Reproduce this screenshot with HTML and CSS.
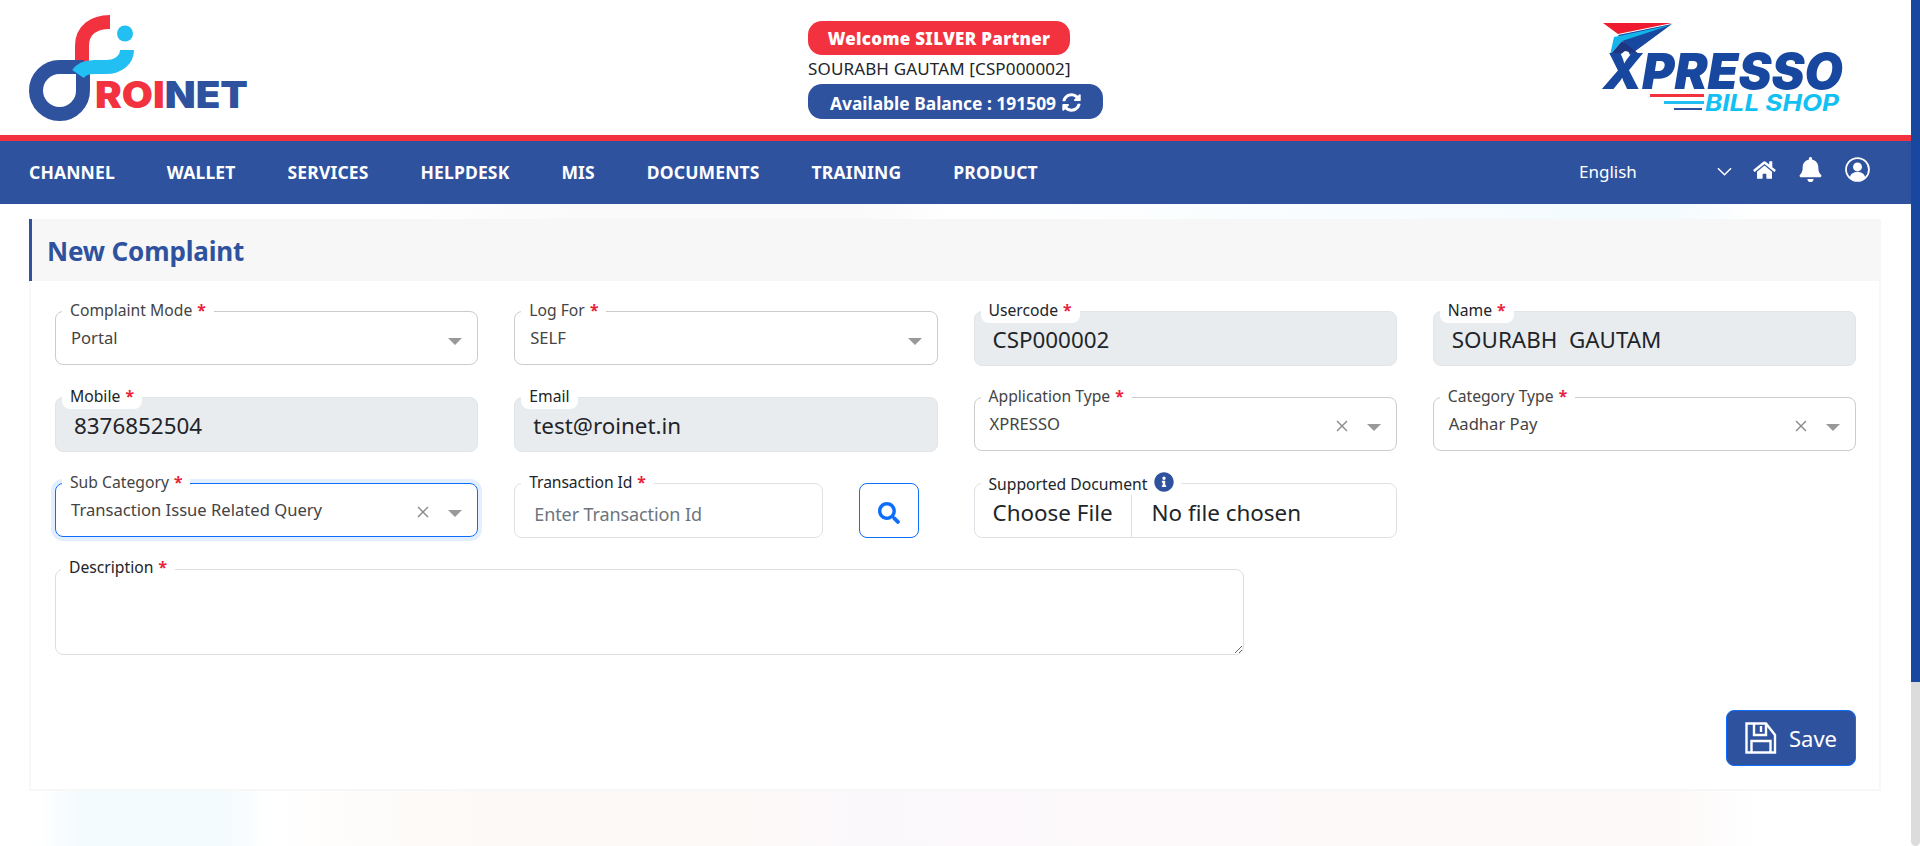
FILE: index.html
```html
<!DOCTYPE html>
<html lang="en">
<head>
  <meta charset="UTF-8" />
  <meta name="viewport" content="width=device-width, initial-scale=1" />
  <title>New Complaint</title>
  <link rel="stylesheet" href="styles.css">
</head>
<body>
  <div class="page">
    <!-- top header -->
    <header class="topbar">
      <svg class="logo-roinet" viewBox="0 0 260 125" aria-label="Roinet logo">
        <path d="M82 66 V46 C82 30 94 22 110 22" fill="none" stroke="#f2333f" stroke-width="14"/>
        <path d="M84 67 H59.500 A23.500 23.500 0 1 0 83 90 V72" fill="none" stroke="#2f529f" stroke-width="14"/>
        <path d="M78 74 C82 68 88 67 94 67 H106 C118 67 127 60 127 50" fill="none" stroke="#22bff3" stroke-width="14"/>
        <circle cx="125" cy="33.500" r="8" fill="#22bff3"/>
        <text class="logo-roinet-text" x="95" y="108" textLength="153" lengthAdjust="spacingAndGlyphs"><tspan fill="#f2333f">ROI</tspan><tspan fill="#2f529f">NET</tspan></text>
      </svg>

      <div class="partner">
        <div class="pill pill-red">Welcome SILVER Partner</div>
        <div class="partner-name">SOURABH GAUTAM [CSP000002]</div>
        <div class="pill pill-blue">
          Available Balance : 191509
          <svg class="refresh" viewBox="0 0 512 512"><path d="M370.72 133.28C339.458 104.008 298.888 87.962 255.848 88c-77.458.068-144.328 53.178-162.791 126.85-1.344 5.363-6.122 9.15-11.651 9.15H24.103c-7.498 0-13.194-6.807-11.807-14.176C33.933 94.924 134.813 8 256 8c66.448 0 126.791 26.136 171.315 68.685L463.03 40.97C478.149 25.851 504 36.559 504 57.941V192c0 13.255-10.745 24-24 24H345.941c-21.382 0-32.09-25.851-16.971-40.971l41.75-41.749zM32 296h134.059c21.382 0 32.09 25.851 16.971 40.971l-41.75 41.75c31.262 29.273 71.835 45.319 114.876 45.28 77.418-.07 144.315-53.144 162.787-126.849 1.344-5.363 6.122-9.15 11.651-9.15h57.304c7.498 0 13.194 6.807 11.807 14.176C478.067 417.076 377.187 504 256 504c-66.448 0-126.791-26.136-171.315-68.685L48.97 471.03C33.851 486.149 8 475.441 8 454.059V320c0-13.255 10.745-24 24-24z"/></svg>
        </div>
      </div>

      <svg class="logo-xpresso" viewBox="0 0 250 120" aria-label="Xpresso Bill Shop logo">
        <polygon points="3,23 72,23 18,34" fill="#ee1c2e"/>
        <polygon points="18,35 72,24 30,55 24,43" fill="#17479e"/>
        <polygon points="14,37 71,25 22,41 10,55" fill="#12b5ea"/>
        <polygon points="10,55 22,41 39,54 25,51 17,57" fill="#1e3580"/>
        <text class="logo-xpresso-name" x="3" y="89" textLength="240" lengthAdjust="spacingAndGlyphs">XPRESSO</text>
        <rect x="50" y="94" width="54" height="3" fill="#f2333f"/>
        <rect x="64" y="101" width="40" height="3" fill="#22bff3"/>
        <rect x="74" y="108" width="28" height="2" fill="#2f529f"/>
        <text class="logo-xpresso-sub" x="105" y="111" textLength="134" lengthAdjust="spacingAndGlyphs">BILL SHOP</text>
      </svg>
    </header>

    <!-- main nav -->
    <nav class="mainnav">
      <ul class="nav-links">
        <li>CHANNEL</li>
        <li>WALLET</li>
        <li>SERVICES</li>
        <li>HELPDESK</li>
        <li>MIS</li>
        <li>DOCUMENTS</li>
        <li>TRAINING</li>
        <li>PRODUCT</li>
      </ul>
      <div class="nav-tools">
        <div class="lang">
          <span class="lang-name">English</span>
          <svg class="chevron" viewBox="0 0 16 16"><path d="M1 4.500l7 7 7-7" fill="none" stroke="#fff" stroke-width="1.600"/></svg>
        </div>
        <svg class="tool-home" viewBox="0 0 576 512"><path fill="#fff" d="M280.37 148.26L96 300.11V464a16 16 0 0 0 16 16l112.06-.29a16 16 0 0 0 15.92-16V368a16 16 0 0 1 16-16h64a16 16 0 0 1 16 16v95.64a16 16 0 0 0 16 16.05L464 480a16 16 0 0 0 16-16V300L295.67 148.26a12.19 12.19 0 0 0-15.3 0zM571.6 251.47L488 182.56V44.05a12 12 0 0 0-12-12h-56a12 12 0 0 0-12 12v72.61L318.47 43a48 48 0 0 0-61 0L4.34 251.47a12 12 0 0 0-1.6 16.9l25.5 31A12 12 0 0 0 45.15 301l235.22-193.74a12.19 12.19 0 0 1 15.3 0L530.9 301a12 12 0 0 0 16.9-1.6l25.5-31a12 12 0 0 0-1.7-16.93z"/></svg>
        <svg class="tool-bell" viewBox="0 0 448 512"><path fill="#fff" d="M224 512c35.32 0 63.97-28.65 63.97-64H160.03c0 35.35 28.65 64 63.97 64zm215.39-149.71c-19.32-20.76-55.47-51.99-55.47-154.29 0-77.7-54.48-139.9-127.94-155.16V32c0-17.67-14.32-32-31.98-32s-31.98 14.33-31.98 32v20.84C118.56 68.1 64.08 130.3 64.08 208c0 102.3-36.15 133.53-55.47 154.29-6 6.45-8.66 14.16-8.61 21.71.11 16.4 12.98 32 32.1 32h383.8c19.12 0 32-15.6 32.1-32 .05-7.55-2.61-15.27-8.61-21.71z"/></svg>
        <svg class="tool-user" viewBox="0 0 24 24">
          <circle cx="12" cy="12" r="11" fill="none" stroke="#fff" stroke-width="1.700"/>
          <circle cx="12" cy="9.500" r="4.300" fill="#fff"/>
          <path d="M4.600 19.400c1-3.600 3.600-5 7.400-5s6.400 1.400 7.400 5c-2 2-4.600 3.200-7.400 3.200s-5.400-1.200-7.400-3.200z" fill="#fff"/>
        </svg>
      </div>
    </nav>

    <main class="content">
      <section class="card">
        <h2 class="card-title">New Complaint</h2>
        <form class="card-body">
          <div class="form-grid">
            <div class="field field-select">
              <label>Complaint Mode <b>*</b></label>
              <span class="value">Portal</span>
              <i class="caret"></i>
            </div>
            <div class="field field-select">
              <label>Log For <b>*</b></label>
              <span class="value">SELF</span>
              <i class="caret"></i>
            </div>
            <div class="field field-input is-disabled">
              <label>Usercode <b>*</b></label>
              <span class="value">CSP000002</span>
            </div>
            <div class="field field-input is-disabled">
              <label>Name <b>*</b></label>
              <span class="value value-pre">SOURABH  GAUTAM</span>
            </div>

            <div class="field field-input is-disabled">
              <label>Mobile <b>*</b></label>
              <span class="value">8376852504</span>
            </div>
            <div class="field field-input is-disabled">
              <label>Email</label>
              <span class="value">test@roinet.in</span>
            </div>
            <div class="field field-select">
              <label>Application Type <b>*</b></label>
              <span class="value">XPRESSO</span>
              <svg class="clear" viewBox="0 0 12 12"><path d="M1 1l10 10M11 1L1 11"/></svg>
              <i class="caret"></i>
            </div>
            <div class="field field-select">
              <label>Category Type <b>*</b></label>
              <span class="value">Aadhar Pay</span>
              <svg class="clear" viewBox="0 0 12 12"><path d="M1 1l10 10M11 1L1 11"/></svg>
              <i class="caret"></i>
            </div>

            <div class="field field-select is-focus">
              <label>Sub Category <b>*</b></label>
              <span class="value">Transaction Issue Related Query</span>
              <svg class="clear" viewBox="0 0 12 12"><path d="M1 1l10 10M11 1L1 11"/></svg>
              <i class="caret"></i>
            </div>
            <div class="txn-group">
              <div class="field field-input is-light">
                <label>Transaction Id <b>*</b></label>
                <span class="value placeholder">Enter Transaction Id</span>
              </div>
              <button type="button" class="btn-search">
                <svg viewBox="0 0 512 512"><path d="M505 442.700L405.300 343c-4.500-4.500-10.600-7-17-7H372c27.600-35.300 44-79.700 44-128C416 93.100 322.900 0 208 0S0 93.100 0 208s93.100 208 208 208c48.300 0 92.700-16.400 128-44v16.300c0 6.400 2.500 12.500 7 17l99.700 99.700c9.400 9.400 24.600 9.400 33.900 0l28.300-28.300c9.400-9.400 9.400-24.600.1-34zM208 336c-70.700 0-128-57.200-128-128 0-70.700 57.200-128 128-128 70.700 0 128 57.200 128 128 0 70.700-57.200 128-128 128z"/></svg>
              </button>
            </div>
            <div class="field field-file is-light">
              <label>Supported Document
                <svg class="info" viewBox="0 0 512 512"><path d="M256 8C119.043 8 8 119.083 8 256c0 136.997 111.043 248 248 248s248-111.003 248-248C504 119.083 392.957 8 256 8zm0 110c23.196 0 42 18.804 42 42s-18.804 42-42 42-42-18.804-42-42 18.804-42 42-42zm56 254c0 6.627-5.373 12-12 12h-88c-6.627 0-12-5.373-12-12v-24c0-6.627 5.373-12 12-12h12v-64h-12c-6.627 0-12-5.373-12-12v-24c0-6.627 5.373-12 12-12h64c6.627 0 12 5.373 12 12v100h12c6.627 0 12 5.373 12 12v24z"/></svg>
              </label>
              <span class="file-btn">Choose File</span>
              <span class="file-name">No file chosen</span>
            </div>
          </div>

          <div class="field field-area">
            <label>Description <b>*</b></label>
            <textarea></textarea>
          </div>

          <div class="actions">
            <button type="button" class="btn-save">
              <svg viewBox="0 0 32 32"><path d="M1.500 1.500H21L30 13V30.500H1.500Z M9 2V13H21V2 M16 4V10 M6.500 30V19H25.500V30" fill="none" stroke="#fff" stroke-width="2.400"/></svg>
              Save
            </button>
          </div>
        </form>
      </section>
    </main>
  </div>

  <div class="scrollbar"><div class="scrollbar-thumb"></div></div>
</body>
</html>
```

FILE: styles.css
```css
* { box-sizing: border-box; }

body {
  margin: 0;
  height: 846px;
  display: flex;
  overflow: hidden;
  background: #fff;
  color: #212529;
  font-family: "Noto Sans", "Open Sans", sans-serif;
}

.page {
  flex: 1;
  min-width: 0;
  display: flex;
  flex-direction: column;
}

/* header */
.topbar {
  height: 141px;
  flex: none;
  background: #fff;
  border-bottom: 6px solid #f2333f;
  display: flex;
  align-items: flex-start;
}

.logo-roinet {
  width: 260px;
  height: 125px;
  flex: none;
  margin-right: 548px;
}

.logo-roinet-text {
  font-family: "Inter", sans-serif;
  font-weight: 900;
  font-size: 37px;
}

.partner {
  width: 295px;
  flex: none;
  padding-top: 21px;
  margin-right: 497px;
}

.pill {
  color: #fff;
  font-weight: 700;
  display: flex;
  align-items: center;
  justify-content: center;
}

.pill-red {
  width: 262px;
  height: 34px;
  background: #f2333f;
  border-radius: 14px;
  font-size: 17px;
  font-weight: 900;
  letter-spacing: 0.3px;
}

.partner-name {
  height: 29px;
  line-height: 27px;
  font-size: 17px;
  letter-spacing: 0.14px;
  white-space: nowrap;
}

.pill-blue {
  width: 295px;
  height: 35px;
  padding-top: 2px;
  background: #2f529f;
  border-radius: 14px;
  font-size: 17.4px;
  gap: 6px;
}

.refresh {
  width: 19px;
  height: 19px;
  fill: #fff;
}

.logo-xpresso {
  width: 250px;
  height: 120px;
  flex: none;
}

.logo-xpresso-name {
  font-family: "Inter", sans-serif;
  font-weight: 900;
  font-style: italic;
  font-size: 50px;
  fill: #17479e;
}

.logo-xpresso-sub {
  font-family: "Inter", sans-serif;
  font-weight: 700;
  font-style: italic;
  font-size: 23px;
  fill: #12c0f3;
}

/* nav */
.mainnav {
  height: 63px;
  flex: none;
  background: #2f529f;
  color: #fff;
  display: flex;
  align-items: center;
  justify-content: space-between;
  padding: 0 41px 0 29px;
}

.nav-links {
  list-style: none;
  margin: -2px 0 0;
  padding: 0;
  display: flex;
  gap: 52px;
  font-size: 17.5px;
  font-weight: 700;
  letter-spacing: 0.15px;
}

.nav-tools {
  display: flex;
  align-items: center;
}

.lang {
  width: 153px;
  display: flex;
  align-items: center;
  justify-content: space-between;
  font-size: 17px;
}

.lang-name {
  padding-bottom: 2px;
}

.chevron {
  width: 15px;
  height: 15px;
  margin-top: -3px;
}

.tool-home {
  width: 23px;
  height: 20px;
  margin: -6px 0 0 21px;
}

.tool-bell {
  width: 23px;
  height: 25px;
  margin: -6px 0 0 23px;
}

.tool-user {
  width: 25px;
  height: 25px;
  margin: -6px 0 0 23px;
}

/* content */
.content {
  flex: 1;
  padding: 15px 30px 0 29px;
  background:
    linear-gradient(90deg, #fff 2%, #f4fbfe 4% 12%, #fff 14%, #fdf9f6 25% 38%, #fbf8fc 45%, #fdf9f9 70% 88%, #fff 92%) bottom / 100% 55px no-repeat,
    linear-gradient(90deg, #fff 20%, #fafafa 30% 45%, #fff 50%, #f4fbfe 82% 88%, #fff 92%) top / 100% 15px no-repeat,
    #fff;
}

.card {
  height: 572px;
  background: #fff;
  border: 2px solid #f7f7f7;
  border-top: none;
}

.card-title {
  margin: 0 0 0 -2px;
  height: 62px;
  line-height: 64px;
  background: #f7f7f7;
  border-left: 3px solid #2f529f;
  padding-left: 15px;
  color: #2f529f;
  font-size: 26px;
  font-weight: 700;
  letter-spacing: -0.15px;
}

.card-body {
  padding: 30px 23px 0 24px;
}

.form-grid {
  display: grid;
  grid-template-columns: repeat(4, 1fr);
  grid-auto-rows: 55px;
  column-gap: 36px;
  row-gap: 31px;
}

/* floating label fields */
.field {
  position: relative;
  display: flex;
  align-items: center;
  border-radius: 8px;
  min-width: 0;
}

.field label {
  position: absolute;
  left: 6px;
  top: -11px;
  height: 22px;
  line-height: 18px;
  padding: 0 8px;
  background: #fff;
  font-size: 15.7px;
  border-radius: 0 0 8px 8px;
  white-space: nowrap;
}

.field label b {
  color: #e8223a;
  font-weight: 700;
  margin-left: 1px;
}

.field-select {
  height: 54px;
  border: 1px solid #ccc;
  padding: 0 15px 2px;
  font-size: 16.6px;
  color: #444;
}

.field-select .value {
  flex: 1;
}

.field-select.is-focus {
  border-color: #0d6efd;
  box-shadow: 0 0 0 4px #e3effe;
}

.caret {
  width: 0;
  height: 0;
  margin-top: 9px;
  border-left: 7px solid transparent;
  border-right: 7px solid transparent;
  border-top: 7px solid #999;
}

.clear {
  width: 12px;
  height: 12px;
  margin: 6px 19px 0 0;
  stroke: #888;
  stroke-width: 1.4;
}

.field-input {
  height: 55px;
  padding: 2px 15px 0 18px;
  font-size: 22.4px;
}

.is-disabled {
  background: #e9ecef;
  border: 1px solid #e2e5e8;
}

.is-light {
  border: 1px solid #dee2e6;
  background: #fff;
}

.value-pre {
  white-space: pre;
}

.txn-group {
  display: flex;
  gap: 36px;
  padding-right: 19px;
}

.txn-group .field {
  flex: 1;
}

.txn-group .field-input {
  font-size: 18px;
  letter-spacing: -0.1px;
  padding: 7px 15px 0 19px;
}

.placeholder {
  color: #6c757d;
}

.btn-search {
  width: 60px;
  height: 55px;
  flex: none;
  background: #fff;
  border: 1px solid #0d6efd;
  border-radius: 8px;
  display: flex;
  align-items: center;
  justify-content: center;
  padding: 5px 0 0;
}

.btn-search svg {
  width: 22px;
  height: 22px;
  fill: #0d6efd;
}

.field-file {
  height: 55px;
  font-size: 22.4px;
}

.field-file label {
  display: flex;
  align-items: center;
  gap: 7px;
  padding-right: 7px;
  z-index: 1;
}

.info {
  width: 20px;
  height: 20px;
  fill: #2f529f;
  margin-top: -4px;
}

.file-btn {
  height: 100%;
  padding: 3px 18px 0;
  border-right: 1px solid #dee2e6;
  display: flex;
  align-items: center;
}

.file-name {
  padding: 3px 0 0 20px;
}

.field-area {
  width: 1189px;
  height: 86px;
  margin-top: 31px;
}

.field-area textarea {
  display: block;
  width: 100%;
  height: 100%;
  border: 1px solid #dedede;
  border-radius: 8px;
  background: #fff;
  outline: none;
}

.actions {
  display: flex;
  justify-content: flex-end;
  margin-top: 55px;
}

.btn-save {
  width: 130px;
  height: 56px;
  background: #2f529f;
  border: 1px solid #0d6efd;
  border-radius: 8px;
  color: #fff;
  font-family: inherit;
  font-size: 22px;
  display: flex;
  align-items: center;
  justify-content: center;
  gap: 12px;
  padding: 0;
}

.btn-save svg {
  width: 32px;
  height: 32px;
}

/* fake page scrollbar */
.scrollbar {
  width: 9px;
  flex: none;
  background: #dcdcdc;
  border-radius: 0 0 5px 5px;
}

.scrollbar-thumb {
  height: 682px;
  background: #17479e;
}
```
